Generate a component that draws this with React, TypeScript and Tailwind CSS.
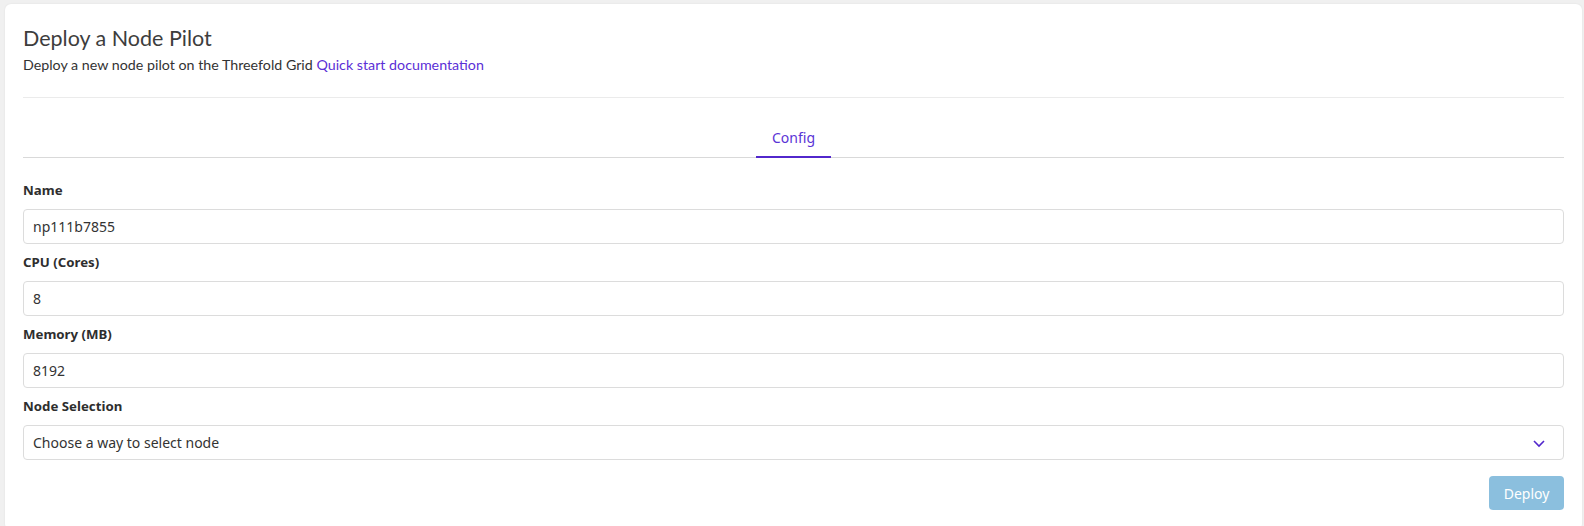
import React from "react";

const labelCls =
  "block text-[13.25px] leading-[20px] font-bold text-[#2e2e2e] mt-[8px] mb-[9px] [font-family:'Noto_Sans','Open_Sans',sans-serif]";
const inputCls =
  "w-full h-[35px] rounded-[4px] border border-[#dcdcdc] bg-white px-[9px] text-[14px] text-[#333333] outline-none [font-family:'Noto_Sans','Open_Sans',sans-serif]";

export default function App() {
  return (
    <div className="min-h-[526px] bg-[#f0f0f0] pl-[5px] pr-[2px] pt-[4px] overflow-hidden">
      <div className="bg-white rounded-[6px] shadow-[0_0_2px_rgba(0,0,0,0.08)] px-[18px] pt-[20px] pb-[20px]">
        <h1 className="text-[21.5px] leading-[28px] text-[#3d3d3d] [font-family:Lato,sans-serif] font-normal">
          Deploy a Node Pilot
        </h1>
        <p className="mt-[3px] text-[14.25px] leading-[20px] text-[#333333] [font-family:Lato,sans-serif]">
          Deploy a new node pilot on the Threefold Grid{" "}
          <a className="text-[#5b2fd6]" href="#">
            Quick start documentation
          </a>
        </p>
        <div className="mt-[22px] h-px bg-[#ebebeb]" />
        <div className="mt-[20px] flex justify-center border-b border-[#d9d9d9]">
          <button className="-mb-px h-[40px] px-[16px] border-b-2 border-[#5227cc] text-[14px] text-[#5a34d6] [font-family:'Noto_Sans','Open_Sans',sans-serif]">
            Config
          </button>
        </div>
        <div className="mt-[22px]">
          <label className={labelCls}>Name</label>
          <input className={inputCls} defaultValue="np111b7855" />
          <label className={labelCls}>CPU (Cores)</label>
          <input className={inputCls} defaultValue="8" />
          <label className={labelCls}>Memory (MB)</label>
          <input className={inputCls} defaultValue="8192" />
          <label className={labelCls}>Node Selection</label>
          <div className={inputCls + " flex items-center justify-between"}>
            <span>Choose a way to select node</span>
            <svg width="14" height="14" viewBox="0 0 14 14" className="mr-[8px]">
              <path d="M2 5 L7 10 L12 5" fill="none" stroke="#5227cc" strokeWidth="1.6" />
            </svg>
          </div>
          <div className="mt-[16px] flex justify-end">
            <button className="h-[34px] w-[75px] rounded-[4px] bg-[#8bbfde] text-white text-[14px] [font-family:'Noto_Sans','Open_Sans',sans-serif]">
              Deploy
            </button>
          </div>
        </div>
      </div>
    </div>
  );
}
